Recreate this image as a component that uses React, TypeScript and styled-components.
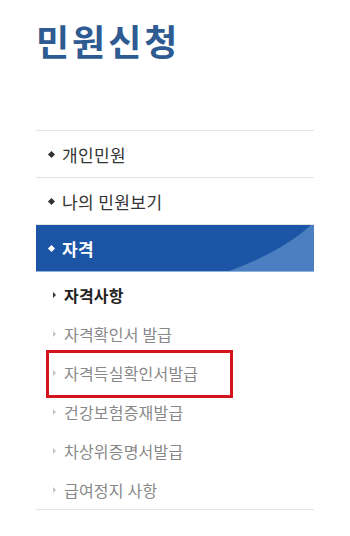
import styled, { createGlobalStyle } from "styled-components";

const GlobalStyle = createGlobalStyle`
  html, body {
    margin: 0;
    padding: 0;
    background: #fff;
  }
  body {
    font-family: "Noto Sans CJK KR", "Noto Sans", sans-serif;
  }
`;

const Page = styled.div`
  width: 350px;
  height: 536px;
  padding-left: 36px;
  box-sizing: border-box;
  overflow: hidden;
`;

const Title = styled.h1`
  margin: 0;
  height: 130px;
  padding: 18px 0 0 0;
  box-sizing: border-box;
  font-size: 36px;
  line-height: 44px;
  font-weight: 700;
  color: #2d5b92;
  letter-spacing: 3px;
`;

const Menu = styled.ul`
  list-style: none;
  margin: 0;
  padding: 0;
  width: 278px;
  border-top: 1px solid #e4e4e4;
`;

const MainItem = styled.li<{ $active?: boolean }>`
  display: flex;
  align-items: center;
  gap: 8px;
  height: 47px;
  padding-left: 13px;
  box-sizing: border-box;
  font-size: 17px;
  letter-spacing: 0.4px;
  font-weight: ${(p) => (p.$active ? 700 : 400)};
  color: ${(p) => (p.$active ? "#fff" : "#333")};
  border-bottom: 1px solid ${(p) => (p.$active ? "#8fb2da" : "#e4e4e4")};
  background: ${(p) =>
    p.$active
      ? "radial-gradient(ellipse 307px 137px at 0 -60px, #1d55a6 99.4%, #4b7fc1 100%)"
      : "transparent"};
`;

const Diamond = styled.span<{ $light?: boolean }>`
  width: 5px;
  height: 5px;
  transform: rotate(45deg);
  background: ${(p) => (p.$light ? "#fff" : "#333")};
  flex: none;
`;

const SubList = styled.ul`
  list-style: none;
  margin: 0;
  padding: 3px 0 0;
  border-bottom: 1px solid #e4e4e4;
`;

const SubItem = styled.li<{ $strong?: boolean; $marked?: boolean }>`
  position: relative;
  display: flex;
  align-items: center;
  gap: 8px;
  height: 39px;
  padding-left: 17px;
  font-size: 16px;
  letter-spacing: 0.2px;
  font-weight: ${(p) => (p.$strong ? 700 : 400)};
  color: ${(p) => (p.$strong ? "#222" : "#888")};

  ${(p) =>
    p.$marked &&
    `
    &::after {
      content: "";
      position: absolute;
      left: 10px;
      top: -3px;
      width: 187px;
      height: 48px;
      box-sizing: border-box;
      border: 3px solid #d3141c;
    }
  `}
`;

const Arrow = styled.span<{ $dark?: boolean }>`
  width: 0;
  height: 0;
  border-top: 3px solid transparent;
  border-bottom: 3px solid transparent;
  border-left: 3px solid ${(p) => (p.$dark ? "#333" : "#c4c4c4")};
  flex: none;
`;

const subs = [
  { label: "자격사항", strong: true },
  { label: "자격확인서 발급" },
  { label: "자격득실확인서발급", marked: true },
  { label: "건강보험증재발급" },
  { label: "차상위증명서발급" },
  { label: "급여정지 사항" },
];

export default function App() {
  return (
    <>
      <GlobalStyle />
      <Page>
        <Title>민원신청</Title>
        <Menu>
          <MainItem>
            <Diamond />
            개인민원
          </MainItem>
          <MainItem>
            <Diamond />
            나의 민원보기
          </MainItem>
          <MainItem $active>
            <Diamond $light />
            자격
          </MainItem>
          <li>
            <SubList>
              {subs.map((s) => (
                <SubItem key={s.label} $strong={s.strong} $marked={s.marked}>
                  <Arrow $dark={s.strong} />
                  {s.label}
                </SubItem>
              ))}
            </SubList>
          </li>
        </Menu>
      </Page>
    </>
  );
}
